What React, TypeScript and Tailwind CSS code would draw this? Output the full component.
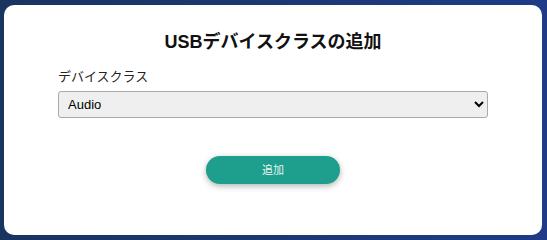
import { useState } from "react";

const FONT = "font-['Liberation_Sans','Noto_Sans_CJK_JP',sans-serif]";

export default function App() {
  const [deviceClass, setDeviceClass] = useState("audio");

  return (
    <div
      className={`h-[240px] w-full bg-gradient-to-r from-[#19345f] to-[#1f3b88] pt-[5px] pb-[5px] pl-[4px] pr-[5px] ${FONT}`}
    >
      <div className="flex h-[230px] flex-col rounded-[10px] bg-white px-[54px] pt-6">
        <h1 className="text-center text-[18px] leading-[27px] font-bold text-[#111]">
          USBデバイスクラスの追加
        </h1>

        <label className="mt-[11px] text-[13px] leading-[20px] text-[#222]">
          デバイスクラス
        </label>
        <select
          value={deviceClass}
          onChange={(e) => setDeviceClass(e.target.value)}
          className="mt-[4px] h-[27px] w-full rounded-[3px] border border-[#aaa] bg-[#efefef] px-[5px] text-[13px] text-black"
        >
          <option value="audio">Audio</option>
          <option value="hid">HID</option>
          <option value="mass-storage">Mass Storage</option>
          <option value="video">Video</option>
        </select>

        <div className="mt-[38px] flex justify-center">
          <button
            type="button"
            className="h-[28px] w-[134px] rounded-full bg-[#1e9e8c] text-[11px] text-[#e8f6f3] shadow-[0_2px_6px_rgba(0,0,0,0.3)]"
          >
            追加
          </button>
        </div>
      </div>
    </div>
  );
}
